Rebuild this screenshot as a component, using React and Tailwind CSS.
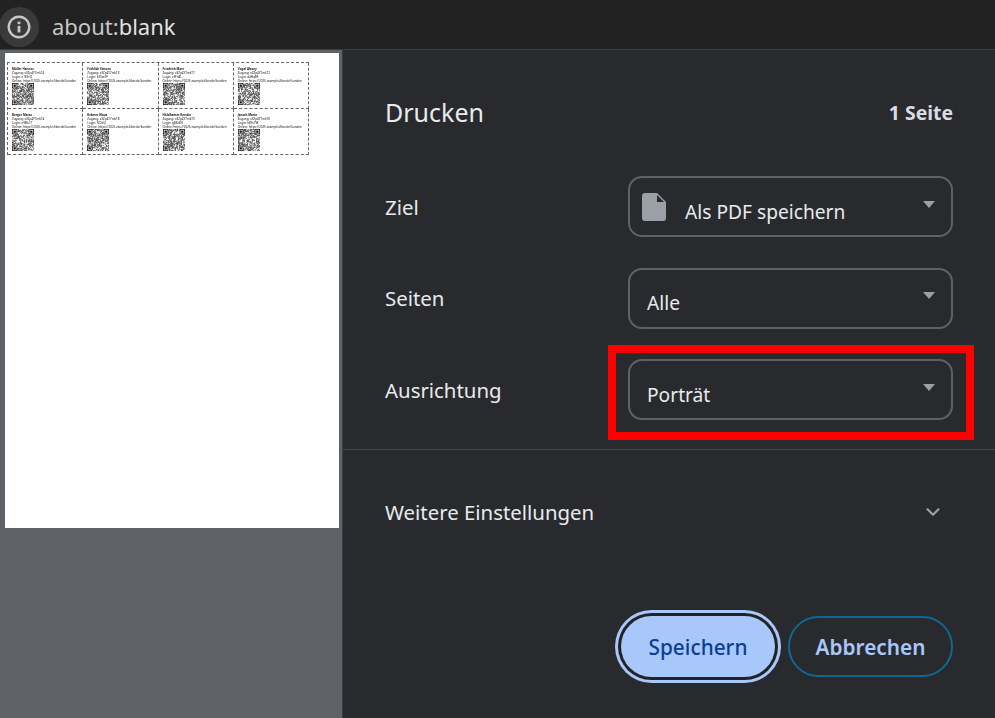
import React from 'react';
import { ChevronDown } from 'lucide-react';

const labels = [
  { name: 'Müller Hannes', code: 'x3Zp4Y7mkT4', pass: 'a1S9cQ' },
  { name: 'Fröhlich Simone', code: 'x3Zp4Y7mkT3', pass: 'b7Kw2P' },
  { name: 'Friedrich Marc', code: 'x3Zp4Y7mkT7', pass: 'c3Fn8L' },
  { name: 'Vogel Alexey', code: 'x3Zp4Y7mkT2', pass: 'd4Hq6R' },
  { name: 'Berger Marco', code: 'x3Zp4Y7mkT4', pass: 'e9Mv1T' },
  { name: 'Krämer Klaus', code: 'x3Zp4Y7mkT8', pass: 'f2Dx5J' },
  { name: 'Hölzlkamm Kerstin', code: 'x3Zp4Y7mkT3', pass: 'g6Bz3N' },
  { name: 'Jansch Maria', code: 'x3Zp4Y7mkT6', pass: 'h8Ys7W' },
];

// QR modules are just noise at this size, seeded so each label looks different
function QrCode({ seed }) {
  const size = 29;
  const cells = [];
  let s = seed * 7919 + 13;
  for (let y = 0; y < size; y++) {
    for (let x = 0; x < size; x++) {
      s = (s * 1103515245 + 12345) % 2147483648;
      const finder = (x < 7 && y < 7) || (x > 21 && y < 7) || (x < 7 && y > 21);
      if (finder) continue;
      if ((s >> 16) % 2 === 0) cells.push(<rect key={`${x}-${y}`} x={x} y={y} width="1" height="1" />);
    }
  }
  const corners = [[0, 0], [22, 0], [0, 22]];
  return (
    <svg viewBox={`0 0 ${size} ${size}`} className="w-[22px] h-[22px] block" fill="#111111">
      {cells}
      {corners.map(([x, y]) => (
        <g key={`${x}-${y}`}>
          <path d={`M${x} ${y}h7v7h-7z M${x + 1} ${y + 1}v5h5v-5z`} fillRule="evenodd" />
          <rect x={x + 2} y={y + 2} width="3" height="3" />
        </g>
      ))}
    </svg>
  );
}

function LabelCard({ label, index }) {
  return (
    <div className="border-r border-b border-dashed border-[#666] h-[46px] pl-[4px] pt-[4px] text-[#111] text-[3px] leading-[3.8px] whitespace-nowrap">
      <div className="font-bold leading-[4px] mb-[1px]">{label.name}</div>
      <div>Zugang: {label.code}</div>
      <div>Login: {label.pass}</div>
      <div>Online: https://2025.example-fiber.de/kunden</div>
      <QrCode seed={index + 1} />
    </div>
  );
}

function Select({ icon, children }) {
  return (
    <div className="w-[325px] h-[61px] rounded-[14px] border-2 border-[#5f6165] flex items-center pl-[17px] pr-[16px] text-[#e8eaed] text-[19.2px]">
      {icon}
      <span className="flex-1 pt-[11px]">{children}</span>
      <span className="w-0 h-0 mb-[5px] border-l-[6px] border-r-[6px] border-t-[7px] border-l-transparent border-r-transparent border-t-[#9aa0a6]" />
    </div>
  );
}

function FormRow({ label, children }) {
  return (
    <div className="flex items-center justify-between">
      <span className="text-[20.4px] text-[#e8eaed] mt-[1px]">{label}</span>
      {children}
    </div>
  );
}

export default function App() {
  return (
    <div className="w-[995px] h-[718px] overflow-hidden flex flex-col bg-[#292a2d] font-['Noto_Sans',sans-serif]">
      <header className="h-[50px] shrink-0 bg-[#222222] border-b border-[#3c3d3f] flex items-center pt-[4px]">
        <div className="w-[40px] h-[40px] -ml-[1px] rounded-full bg-[#3a3a3a] flex items-center justify-center">
          <svg viewBox="0 0 24 24" className="w-[26px] h-[26px]" fill="none" stroke="#c4c7c5" strokeWidth="2.2">
            <circle cx="12" cy="12" r="9.5" />
            <path d="M12 11v6" strokeWidth="2.6" />
            <path d="M12 7v2.4" strokeWidth="2.6" />
          </svg>
        </div>
        <span className="ml-[13px] text-[22px] text-[#c7c7c7]">
          about:<span className="text-[#e3e3e3]">blank</span>
        </span>
      </header>

      <div className="flex flex-1 min-h-0">
        <aside className="w-[343px] shrink-0 bg-[#5f6368] border-r border-[#3c3d3f] pl-[5px] pt-[3px]">
          <div className="w-[334px] h-[475px] bg-white pl-[2px] pt-[9px] blur-[0.5px]">
            <div className="w-[302px] grid grid-cols-4 border-l border-t border-dashed border-[#666]">
              {labels.map((label, i) => (
                <LabelCard key={i} label={label} index={i} />
              ))}
            </div>
          </div>
        </aside>

        <main className="flex-1 flex flex-col text-[#e8eaed]">
          <div className="pl-[42px] pr-[42px]">
            <div className="flex items-center justify-between h-[48px] mt-[39px] mb-[39px]">
              <h1 className="text-[25px] font-normal text-[#e8eaed]">Drucken</h1>
              <span className="text-[19.4px] font-bold text-[#dadce0]">1 Seite</span>
            </div>
            <div className="flex flex-col gap-[30.5px]">
              <FormRow label="Ziel">
                <Select
                  icon={
                    <svg viewBox="0 0 24 28" className="w-[24px] h-[28px] mr-[19px] -ml-[5px] shrink-0">
                      <path d="M3 0H15l9 9v16a3 3 0 0 1-3 3H3a3 3 0 0 1-3-3V3a3 3 0 0 1 3-3z" fill="#9aa0a6" />
                      <path d="M15 2v7h7z" fill="#292a2d" />
                    </svg>
                  }
                >
                  Als PDF speichern
                </Select>
              </FormRow>
              <FormRow label="Seiten">
                <Select>Alle</Select>
              </FormRow>
              <FormRow label="Ausrichtung">
                <div className="relative">
                  <Select>Porträt</Select>
                  <div className="absolute -left-[20px] -right-[21px] -top-[14px] -bottom-[20px] border-[8px] border-[#ff0000] pointer-events-none" />
                </div>
              </FormRow>
            </div>
          </div>

          <div className="mt-[29px] border-t border-[#45464a]" />

          <div className="flex items-center justify-between pl-[42px] pr-[51px] h-[62px] mt-[31px]">
            <span className="text-[20.4px]">Weitere Einstellungen</span>
            <ChevronDown className="w-[22px] h-[22px] text-[#9aa0a6]" strokeWidth={2.4} />
          </div>

          <div className="flex justify-end items-center gap-[13px] pr-[42px] mt-[73px]">
            <button className="w-[154px] h-[61px] pt-[2px] rounded-full bg-[#a8c7fa] text-[#0b3f8f] text-[20.8px] font-medium shadow-[0_0_0_3px_#222222,0_0_0_6px_#a8c7fa]">
              Speichern
            </button>
            <button className="w-[165px] h-[61px] pt-[2px] rounded-full border-2 border-[#0b6a94] text-[#a8c7fa] text-[20.8px] font-semibold">
              Abbrechen
            </button>
          </div>
        </main>
      </div>
    </div>
  );
}
